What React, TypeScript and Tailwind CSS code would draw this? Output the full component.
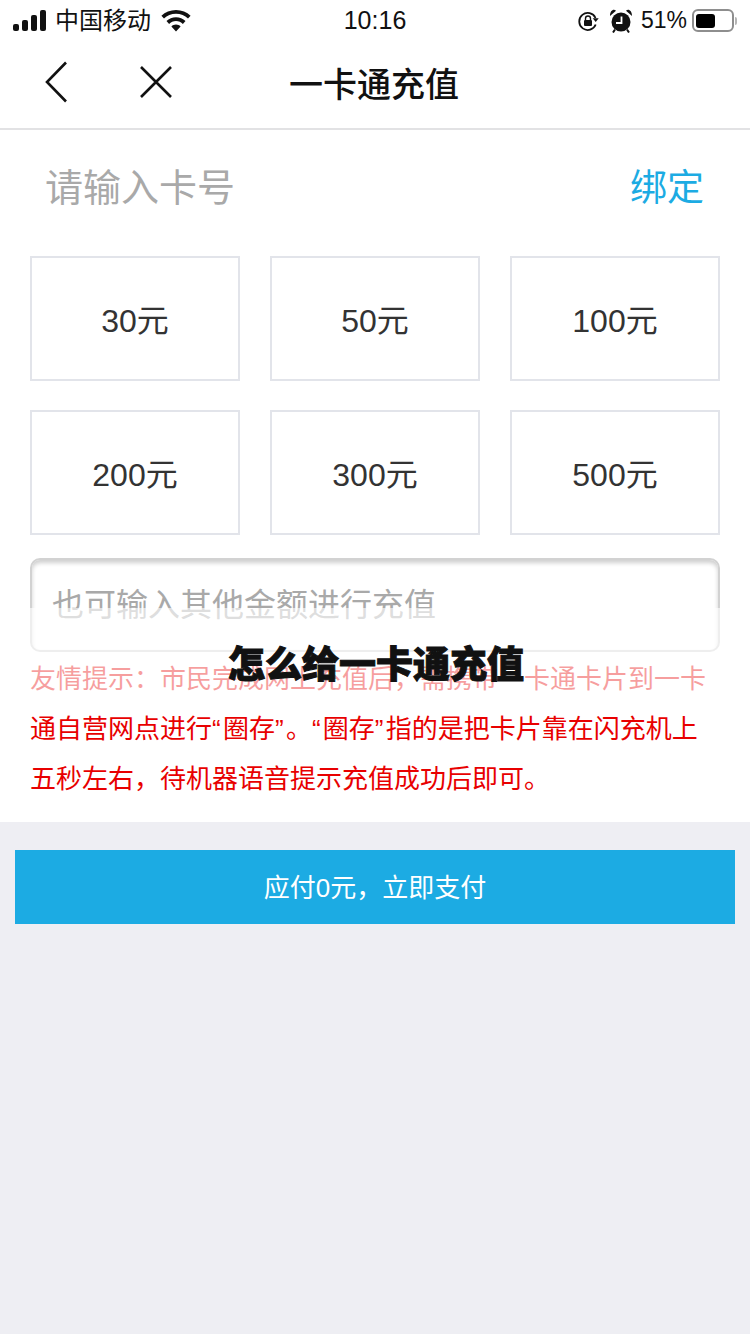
import React from "react";

const sans = 'font-["Liberation_Sans","Noto_Sans_CJK_SC",sans-serif]';

function Signal() {
  return (
    <svg width="34" height="22" viewBox="0 0 34 22" className="fill-[#111]">
      <rect x="0" y="14" width="6" height="7" rx="2" />
      <rect x="9" y="10" width="6" height="11" rx="2" />
      <rect x="18" y="5" width="6" height="16" rx="2" />
      <rect x="27" y="0" width="6" height="21" rx="2" />
    </svg>
  );
}

function Wifi() {
  return (
    <svg width="30" height="22" viewBox="0 0 30 22" className="fill-[#111]">
      <path d="M15 0C9.300 0 4.200 2.200.400 5.800l2.600 2.800C6.100 5.600 10.300 3.800 15 3.800s8.900 1.800 12 4.800l2.600-2.800C25.800 2.200 20.700 0 15 0z" />
      <path d="M15 7.300c-3.700 0-7 1.400-9.500 3.800l2.600 2.800c1.800-1.700 4.200-2.800 6.900-2.800s5.100 1.100 6.900 2.800l2.600-2.800C22 8.700 18.700 7.300 15 7.300z" />
      <path d="M15 14.600c-1.800 0-3.400.7-4.600 1.800L15 21.500l4.600-5.100c-1.200-1.100-2.800-1.800-4.600-1.800z" />
    </svg>
  );
}

function RotationLock() {
  return (
    <svg width="22" height="22" viewBox="0 0 22 22" fill="none">
      <path d="M18.500 8A8.500 8.500 0 1 0 18.700 14.500" stroke="#111" strokeWidth="1.800" />
      <path d="M15.700 8.300h6l-3 3.700z" fill="#111" />
      <rect x="7" y="10" width="8" height="6" rx="1" fill="#111" />
      <path d="M8.500 10V8.500a2.500 2.500 0 0 1 5 0V10" stroke="#111" strokeWidth="1.400" />
    </svg>
  );
}

function Alarm() {
  return (
    <svg width="22" height="24" viewBox="0 0 22 24">
      <circle cx="11" cy="13" r="9.500" fill="#111" />
      <path d="M11.500 7.500V14H6" stroke="#fff" strokeWidth="1.800" fill="none" />
      <path d="M0 7 6 1.800C3.700-.5 0 1.500 0 7zM22 7 16 1.800C18.300-.5 22 1.500 22 7z" fill="#111" />
      <path d="M5 20.500 3 23.500M17 20.500 19 23.500" stroke="#111" strokeWidth="2" />
    </svg>
  );
}

function Battery() {
  return (
    <div className="flex items-center">
      <div className="flex h-[23px] w-[42px] items-center rounded-[6px] border-2 border-[#8e8e8e] p-[2px]">
        <div className="h-[14px] w-[19px] rounded-[3px] bg-black" />
      </div>
      <div className="ml-[1px] h-[8px] w-[2px] rounded-r-sm bg-[#b5b5b5]" />
    </div>
  );
}

function Q({ children }: { children: React.ReactNode }) {
  return <span className="tracking-[2.25px]">{children}</span>;
}

const amounts = ["30元", "50元", "100元", "200元", "300元", "500元"];

export default function App() {
  return (
    <div className={`relative min-h-[1334px] w-[750px] bg-[#eeeef3] ${sans}`}>
      <div className="bg-white">
        {/* status bar */}
        <div className="grid h-[41px] grid-cols-[1fr_auto_1fr] items-center pl-[13px] pr-[13px] text-[#111]">
          <div className="flex items-center">
            <Signal />
            <span className="ml-[8px] text-[24px] leading-none">中国移动</span>
            <span className="ml-[10px] flex"><Wifi /></span>
          </div>
          <span className="text-[25px] leading-none">10:16</span>
          <div className="flex items-center justify-end">
            <RotationLock />
            <span className="ml-[11px] flex"><Alarm /></span>
            <span className="ml-[9px] text-[23px] leading-none">51%</span>
            <span className="ml-[5px] flex"><Battery /></span>
          </div>
        </div>

        {/* nav bar */}
        <div className="relative flex h-[89px] items-center justify-center border-b-2 border-[#e2e2e4]">
          <div className="absolute left-[45px] top-[20px] flex items-center">
            <svg width="24" height="42" viewBox="0 0 24 42" fill="none" stroke="#111" strokeWidth="2.600">
              <path d="M21 1.500 2 21l19 19.500" />
            </svg>
            <svg className="ml-[70px]" width="34" height="34" viewBox="0 0 34 34" fill="none" stroke="#111" strokeWidth="2.600">
              <path d="M2 2l30 30M32 2 2 32" />
            </svg>
          </div>
          <span className="pr-[2px] text-[34px] font-medium leading-none text-[#111]">一卡通充值</span>
        </div>

        {/* card number */}
        <div className="flex h-[126px] items-center justify-between pb-[9px] pl-[45px] pr-[46px]">
          <span className="text-[38px] text-[#a9a9a9]">请输入卡号</span>
          <span className="text-[37px] text-[#1cabe3]">绑定</span>
        </div>

        {/* amounts */}
        <div className="grid grid-cols-3 gap-x-[30px] gap-y-[29px] px-[30px]">
          {amounts.map((a) => (
            <div
              key={a}
              className="flex h-[125px] items-center justify-center border-2 border-[#e2e4ea] pt-[4px] text-[32px] text-[#333]"
            >
              {a}
            </div>
          ))}
        </div>

        {/* other amount */}
        <div className="mx-[30px] mt-[23px] flex h-[94px] items-center rounded-[10px] border-2 border-[#d2d2d2] pl-[20px] text-[32px] text-[#a9a9a9] shadow-[inset_0_3px_4px_#cfcfcf]">
          也可输入其他金额进行充值
        </div>

        {/* tips */}
        <p className="pb-[18px] pl-[30px] pr-[40px] pt-[2px] text-[26px] leading-[50px] text-[#e80000] [text-spacing-trim:space-all]">
          友情提示：市民完成网上充值后，需携带一卡通卡片到一卡通自营网点进行<Q>“</Q>圈存<Q>”</Q>。<Q>“</Q>圈存<Q>”</Q>指的是把卡片靠在闪充机上五秒左右，待机器语音提示充值成功后即可。
        </p>
      </div>

      {/* pay button */}
      <div className="mx-[15px] mt-[28px] flex h-[74px] items-center justify-center bg-[#1cabe3] pt-[3px] text-[26px] text-white">
        应付0元，立即支付
      </div>

      {/* fade + watermark title */}
      <div className="absolute left-0 top-[608px] h-[98px] w-full bg-white/[0.62]" />
      <div className="absolute left-0 top-[637px] flex w-full justify-center pl-[2px]">
        <span className='font-["Noto_Sans_CJK_SC",sans-serif] text-[37px] font-black leading-[50px] text-[#111] [-webkit-text-stroke:1px_#111]'>
          怎么给一卡通充值
        </span>
      </div>
    </div>
  );
}
